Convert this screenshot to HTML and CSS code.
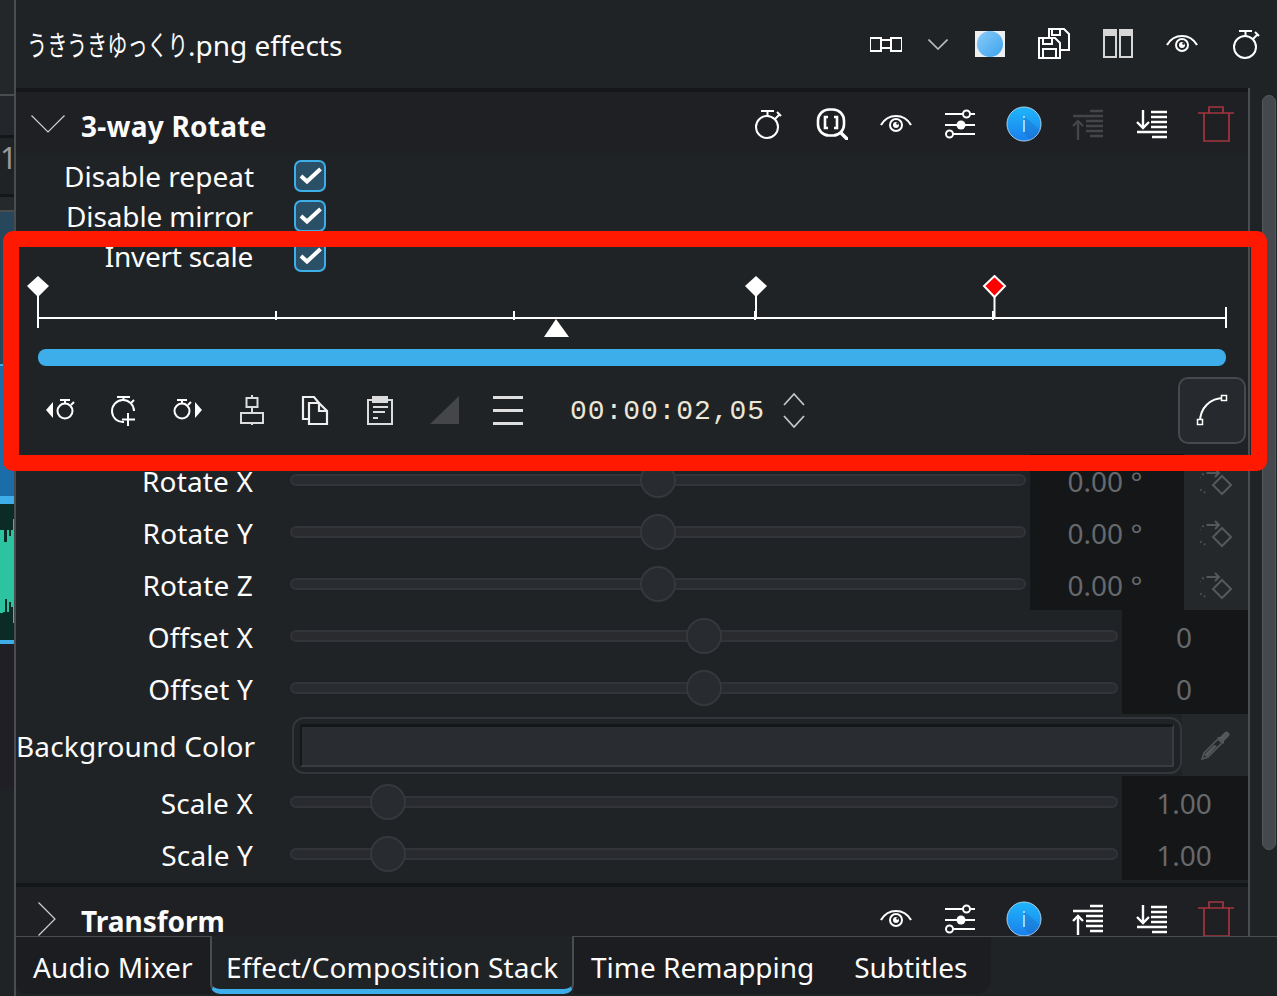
FILE: index.html
```html
<!DOCTYPE html>
<html lang="en">
<head>
<meta charset="utf-8">
<title>Effect stack</title>
<link rel="stylesheet" href="styles.css">
</head>
<body>
<svg class="defs" aria-hidden="true">
  <defs>
    <linearGradient id="infoGrad" x1="0" y1="0" x2="0" y2="1"><stop offset="0" stop-color="#1fb6fa"/><stop offset="1" stop-color="#1a7fec"/></linearGradient>
    <linearGradient id="dotGrad" x1="0" y1="0" x2="1" y2="1"><stop offset="0" stop-color="#8ccbf8"/><stop offset="1" stop-color="#3aa3ee"/></linearGradient>
    <symbol id="i-chrono" viewBox="0 0 32 32"><g fill="none" stroke="currentColor" stroke-width="2"><circle cx="15" cy="19" r="11"/><path d="M9 3H22M15.500 3V8M23 11l4-4M25 4l4 4"/></g></symbol>
    <symbol id="i-eye" viewBox="0 0 32 32"><g fill="none" stroke="currentColor"><path d="M1 17C8 5 24 5 31 17" stroke-width="2.200"/><circle cx="16" cy="17" r="6" stroke-width="2"/></g><circle cx="16" cy="17" r="3" fill="currentColor"/><circle cx="17.500" cy="15.500" r="1.200" fill="#202326"/></symbol>
    <symbol id="i-sliders" viewBox="0 0 32 32"><g fill="none" stroke="currentColor" stroke-width="2"><path d="M1 6H19M26 6H31M1 17H31M9 26H31"/><circle cx="22.500" cy="6" r="3.500"/><circle cx="5.500" cy="26" r="3.500"/></g><circle cx="17" cy="17" r="4.500" fill="currentColor"/></symbol>
    <symbol id="i-info" viewBox="0 0 36 36"><circle cx="18" cy="18" r="17" fill="url(#infoGrad)" stroke="#a9cfe8" stroke-width="1"/><path d="M18 10L34 24A17 17 0 0 1 24 34L18 27Z" fill="#1a5fb8" opacity=".28"/><rect x="17" y="14" width="2" height="12" fill="#9fd4f8"/><rect x="17" y="10" width="2" height="2" fill="#9fd4f8"/></symbol>
    <symbol id="i-up" viewBox="0 0 32 32"><g fill="none" stroke="currentColor" stroke-width="2.400"><path d="M18 3H31M1 8H31M14 13H31M14 18H31M14 23H31M18 28H31M6 32V13"/><path d="M1 18L6 13L11 18"/></g></symbol>
    <symbol id="i-down" viewBox="0 0 32 32"><g fill="none" stroke="currentColor" stroke-width="2.400"><path d="M15 4H31M15 9H31M15 14H31M15 19H31M1 24H31M16 29H31M7 2V20"/><path d="M1 14L7 20L13 14"/></g></symbol>
    <symbol id="i-trash" viewBox="0 0 36 36"><g fill="none" stroke="currentColor" stroke-width="1.700"><path d="M0 7H36M6 7V35H31V7M11 7V1H25V7"/></g></symbol>
    <symbol id="i-link" viewBox="0 0 32 32"><g fill="none" stroke="currentColor" stroke-width="2"><path d="M11 12V10H0V23H11V20M21 12V10H32V23H21V20"/><rect x="11" y="12" width="10" height="8"/></g></symbol>
    <symbol id="i-save" viewBox="0 0 32 32"><g fill="none" stroke="currentColor" stroke-width="2"><path d="M11 9V1H26L31 6V22H23M14 1V7H22V1"/><path d="M1 10H17L22 15V30H1ZM5 10V16H14V10M5 30V21H18V30" fill="#202326"/></g></symbol>
    <symbol id="i-cols" viewBox="0 0 32 32"><path d="M1 1H15V30H1ZM17 1H31V30H17Z" fill="#d6d6d6"/><path d="M3 8H13V28H3ZM19 8H29V28H19Z" fill="#202326"/></symbol>
    <symbol id="i-prev" viewBox="0 0 32 32"><path d="M2 16L9 8V24Z" fill="currentColor"/><g fill="none" stroke="currentColor" stroke-width="2"><circle cx="21" cy="17" r="7.500"/><path d="M16 6H26M21 6V9M27 11l3-3"/></g></symbol>
    <symbol id="i-next" viewBox="0 0 32 32"><path d="M30 16L23 8V24Z" fill="currentColor"/><g fill="none" stroke="currentColor" stroke-width="2"><circle cx="10" cy="17" r="7.500"/><path d="M5 6H15M10 6V9M16 11l3-3"/></g></symbol>
    <symbol id="i-add" viewBox="0 0 32 32"><g fill="none" stroke="currentColor" stroke-width="2"><path d="M26 17A11 11 0 1 0 16 28"/><path d="M9 3H22M15.500 3V6M23 9l3-3M20 19V32M14 25.500H27"/></g></symbol>
    <symbol id="i-align" viewBox="0 0 32 32"><g fill="none" stroke="#dcdcdc" stroke-width="2"><path d="M16 1V4M16 13V19M16 29V31"/><rect x="10.500" y="4" width="11" height="9"/><rect x="5" y="19" width="22" height="10"/></g></symbol>
    <symbol id="i-copy" viewBox="0 0 32 32"><g fill="none" stroke="#f0f0f0" stroke-width="2.200"><path d="M9 25H3V3H14L19 9"/><path d="M9 9H19L27 17V30H9Z"/><path d="M19 9V17H27"/></g></symbol>
    <symbol id="i-paste" viewBox="0 0 32 32"><g fill="none" stroke="#dcdcdc" stroke-width="2"><path d="M8 6H4V30H28V6H24"/><path d="M9 13H24M9 18H21M9 24H14"/></g><path d="M8 2H24V9H8Z" fill="#dcdcdc"/></symbol>
    <symbol id="i-kf" viewBox="0 0 32 32"><g fill="none" stroke="#55585b" stroke-width="2"><path d="M22 10L31 19L22 28L13 19Z"/><path d="M8 7H19M15 3L19 7L15 11"/><path d="M8 7A10 10 0 0 0 8 27" stroke-dasharray="1.500 3"/></g></symbol>
    <symbol id="i-drop" viewBox="0 0 32 32"><path d="M3 30L5 24L19 10L23 14L9 28Z" fill="none" stroke="#55585b" stroke-width="1.500"/><path d="M5 26L15 16L18 17L8 28Z" fill="#55585b"/><path d="M18 8L21 8L26 3C28 1 32 5 30 7L25 12L25 15Z" fill="#55585b"/></symbol>
  </defs>
</svg>

<div class="app">
  <div class="upper">
    <aside class="strip">
      <div class="st st-a"></div>
      <div class="st st-b"></div>
      <div class="st st-c"><span class="st-num">1</span></div>
      <div class="st st-d"></div>
      <div class="st st-e"></div>
      <div class="st st-f"></div>
      <div class="st st-g"></div>
      <svg class="st-wave" viewBox="0 0 14 136" preserveAspectRatio="none"><rect width="14" height="136" fill="#2cc3a1"/><path d="M0 0H14V15H13V26H11V32H9V26H7V38H4V26H0Z" fill="#0b2b26"/><path d="M0 136H14V119H13V103H11V98H9V108H7V95H5V108H3V109H0Z" fill="#0b2b26"/></svg>
      <div class="st st-g2"></div>
      <div class="st st-h"></div>
    </aside>

    <main class="panel">
      <header class="top-head">
        <h1 class="top-title"><span class="kana">うきうきゆっくり</span>.png effects</h1>
        <div class="top-tools">
          <span class="btn"><svg class="ic"><use href="#i-link"/></svg></span>
          <span class="btn btn-narrow"><svg class="chev-down" viewBox="0 0 20 11"><path d="M0.500 0.500L10 10L19.500 0.500" fill="none" stroke="#bdbdbd" stroke-width="1.600"/></svg></span>
          <span class="btn"><span class="swatch-dot"><svg class="dot" viewBox="0 0 26 26"><circle cx="13" cy="13" r="13" fill="url(#dotGrad)"/></svg></span></span>
          <span class="btn"><svg class="ic"><use href="#i-save"/></svg></span>
          <span class="btn"><svg class="ic"><use href="#i-cols"/></svg></span>
          <span class="btn"><svg class="ic"><use href="#i-eye"/></svg></span>
          <span class="btn"><svg class="ic"><use href="#i-chrono"/></svg></span>
        </div>
      </header>

      <div class="split">
        <div class="stack">
          <div class="sep"></div>
          <section class="fx">
            <div class="fx-head">
              <svg class="chev-open" viewBox="0 0 34 18"><path d="M0.500 0.500L17 17L33.500 0.500" fill="none" stroke="#d0d0d0" stroke-width="1.200"/></svg>
              <h2 class="fx-title fx-title-open">3-way Rotate</h2>
              <div class="fx-tools">
                <span class="btn"><svg class="ic"><use href="#i-chrono"/></svg></span>
                <span class="btn"><svg class="ic" viewBox="0 0 32 32"><g fill="none" stroke="currentColor" stroke-width="2.600"><rect x="2" y="1.500" width="26" height="26" rx="11"/><path d="M24 24L32 32" stroke-width="3.400"/><path d="M12 9H9V20H12M18 9H21V20H18"/></g></svg></span>
                <span class="btn"><svg class="ic"><use href="#i-eye"/></svg></span>
                <span class="btn"><svg class="ic"><use href="#i-sliders"/></svg></span>
                <span class="btn"><svg class="ic-36"><use href="#i-info"/></svg></span>
                <span class="btn is-off"><svg class="ic"><use href="#i-up"/></svg></span>
                <span class="btn"><svg class="ic"><use href="#i-down"/></svg></span>
                <span class="btn is-danger"><svg class="ic-36"><use href="#i-trash"/></svg></span>
              </div>
            </div>

            <div class="checks">
              <label class="row-check"><span class="lbl">Disable repeat</span><span class="box"><svg viewBox="0 0 28 28"><path d="M5 14L11 19.500L24.500 7" fill="none" stroke="#fff" stroke-width="4"/></svg></span></label>
              <label class="row-check"><span class="lbl lbl-tight">Disable mirror</span><span class="box"><svg viewBox="0 0 28 28"><path d="M5 14L11 19.500L24.500 7" fill="none" stroke="#fff" stroke-width="4"/></svg></span></label>
              <label class="row-check"><span class="lbl lbl-tighter">Invert scale</span><span class="box"><svg viewBox="0 0 28 28"><path d="M5 14L11 19.500L24.500 7" fill="none" stroke="#fff" stroke-width="4"/></svg></span></label>
            </div>

            <svg class="ruler" viewBox="16 275 1232 63">
              <g stroke="#fff" stroke-width="2" fill="none">
                <path d="M38 318H1226M276 311V320M514 311V320M755 311V320M993 311V320M1226 307V328"/>
                <path d="M38 290V328M756 290V318M994.500 290V318"/>
              </g>
              <path d="M38 276L49 286L38 297L27 286Z" fill="#fff"/>
              <path d="M756 276L767 286L756 297L745 286Z" fill="#fff"/>
              <path d="M994.500 276L1005 286L994.500 297L984 286Z" fill="#f00" stroke="#fff" stroke-width="2"/>
              <path d="M556 319L569 337H544Z" fill="#fff"/>
            </svg>
            <div class="progress"></div>

            <div class="kf-bar">
              <span class="btn"><svg class="ic"><use href="#i-prev"/></svg></span>
              <span class="btn"><svg class="ic"><use href="#i-add"/></svg></span>
              <span class="btn"><svg class="ic"><use href="#i-next"/></svg></span>
              <span class="btn"><svg class="ic"><use href="#i-align"/></svg></span>
              <span class="btn"><svg class="ic"><use href="#i-copy"/></svg></span>
              <span class="btn"><svg class="ic"><use href="#i-paste"/></svg></span>
              <span class="btn"><svg class="ic" viewBox="0 0 32 32"><path d="M2 30L31 2V30Z" fill="#444649"/></svg></span>
              <span class="btn"><span class="burger"><i></i><i></i><i></i></span></span>
              <span class="time">00:00:02,05</span>
              <span class="spin"><svg viewBox="0 0 24 36"><path d="M2 13L12 2L22 13M2 24L12 35L22 24" fill="none" stroke="#c4c4c4" stroke-width="1.800"/></svg></span>
              <span class="curve"><svg viewBox="0 0 34 34"><path d="M5 29C5 15 15 5 29 5" fill="none" stroke="#fff" stroke-width="2"/><rect x="2.500" y="26.500" width="5" height="5" fill="#202326" stroke="#fff" stroke-width="1.500"/><rect x="26.500" y="2.500" width="5" height="5" fill="#202326" stroke="#fff" stroke-width="1.500"/></svg></span>
            </div>

            <div class="params">
              <div class="row"><span class="lbl">Rotate X</span><span class="track"><span class="knob" style="left:50%"></span></span><span class="val val-deg">0.00 °</span><span class="kf-cell"><svg class="ic"><use href="#i-kf"/></svg></span></div>
              <div class="row"><span class="lbl">Rotate Y</span><span class="track"><span class="knob" style="left:50%"></span></span><span class="val val-deg">0.00 °</span><span class="kf-cell"><svg class="ic"><use href="#i-kf"/></svg></span></div>
              <div class="row"><span class="lbl">Rotate Z</span><span class="track"><span class="knob" style="left:50%"></span></span><span class="val val-deg">0.00 °</span><span class="kf-cell"><svg class="ic"><use href="#i-kf"/></svg></span></div>
              <div class="row"><span class="lbl">Offset X</span><span class="track"><span class="knob" style="left:50%"></span></span><span class="val">0</span></div>
              <div class="row"><span class="lbl">Offset Y</span><span class="track"><span class="knob" style="left:50%"></span></span><span class="val">0</span></div>
              <div class="row row-color"><span class="lbl">Background Color</span><span class="color-field"><span class="color-inner"></span></span><span class="drop-cell"><svg class="ic"><use href="#i-drop"/></svg></span></div>
              <div class="row"><span class="lbl">Scale X</span><span class="track"><span class="knob" style="left:11.700%"></span></span><span class="val">1.00</span></div>
              <div class="row"><span class="lbl">Scale Y</span><span class="track"><span class="knob" style="left:11.700%"></span></span><span class="val">1.00</span></div>
            </div>
          </section>
          <div class="sep sep-second"></div>
          <section class="fx-head fx-head-closed">
            <svg class="chev-closed" viewBox="0 0 18 34"><path d="M0.500 0.500L17 17L0.500 33.500" fill="none" stroke="#d0d0d0" stroke-width="1.200"/></svg>
            <h2 class="fx-title fx-title-closed">Transform</h2>
            <div class="fx-tools">
              <span class="btn"><svg class="ic"><use href="#i-eye"/></svg></span>
              <span class="btn"><svg class="ic"><use href="#i-sliders"/></svg></span>
              <span class="btn"><svg class="ic-36"><use href="#i-info"/></svg></span>
              <span class="btn"><svg class="ic"><use href="#i-up"/></svg></span>
              <span class="btn"><svg class="ic"><use href="#i-down"/></svg></span>
              <span class="btn is-danger"><svg class="ic-36"><use href="#i-trash"/></svg></span>
            </div>
          </section>
        </div>
        <div class="scroll"><div class="thumb"></div></div>
      </div>
    </main>
  </div>

  <nav class="tabs">
    <span class="tab tab-first">Audio Mixer</span>
    <span class="tab tab-active">Effect/Composition Stack</span>
    <span class="tab tab-third">Time Remapping</span>
    <span class="tab tab-last">Subtitles</span>
  </nav>
</div>

<div class="callout"></div>
</body>
</html>
```

FILE: styles.css
```css
* { box-sizing: border-box; }
html, body { margin: 0; padding: 0; }
body {
  width: 1277px;
  height: 996px;
  overflow: hidden;
  background: #202326;
  color: #fcfcfc;
  font-family: "Noto Sans", "Noto Sans CJK JP", sans-serif;
  font-size: 28px;
  position: relative;
}
.defs { position: absolute; width: 0; height: 0; }
.app { display: flex; flex-direction: column; height: 996px; }
.upper { display: flex; height: 936px; overflow: hidden; }

/* left strip: edge of the timeline behind the panel */
.strip { width: 16px; flex: none; display: flex; flex-direction: column; border-right: 2px solid #4a4d50; }
.st { flex: none; }
.st-a { height: 96px; background: #24272a; border-bottom: 2px solid #4a4d50; }
.st-b { height: 42px; background: #23262a; border-bottom: 3px solid #141618; }
.st-c { height: 56px; background: #202326; color: #9a9a9a; font-size: 30px; line-height: 40px; text-align: right; overflow: hidden; }
.st-num { display: block; margin-right: 1px; letter-spacing: -4px; }
.st-d { height: 18px; background: #26292c; border-top: 3px solid #141618; border-bottom: 2px solid #4a4d50; }
.st-e { height: 152px; background: #27475c; }
.st-f { height: 2px; background: #3daee9; }
.st-g { height: 138px; background: #1a6da8; border-bottom: 8px solid #3daee9; }
.st-wave { display: block; width: 14px; height: 136px; flex: none; }
.st-g2 { height: 4px; background: #3daee9; width: 14px; }
.st-h { height: 144px; background: #211f26; width: 14px; }

.panel { flex: 1; display: flex; flex-direction: column; min-width: 0; }
.top-head { height: 88px; flex: none; display: flex; align-items: center; }
.top-title { margin: 0 0 0 11px; font-size: 28px; font-weight: 400; white-space: nowrap; }
.kana { display: inline-block; width: 161px; white-space: nowrap; transform: scaleX(.72); transform-origin: left center; }
.top-tools { margin-left: auto; margin-right: -1px; display: flex; align-items: center; color: #fff; }

.btn { width: 64px; height: 64px; flex: none; display: flex; align-items: center; justify-content: center; color: #fff; }
.btn-narrow { width: 40px; }
.ic { width: 32px; height: 32px; display: block; }
.ic-36 { width: 36px; height: 36px; display: block; }
.is-off { color: #434548; }
.is-danger { color: #a5343f; }
.chev-down { width: 20px; height: 11px; }
.swatch-dot { width: 30px; height: 26px; background: #eceef0; display: flex; align-items: center; justify-content: center; }
.dot { width: 26px; height: 26px; display: block; }

.split { flex: 1; display: flex; min-height: 0; }
.stack { width: 1234px; flex: none; border-right: 2px solid #4a4d50; overflow: hidden; }
.sep { height: 4px; background: #141618; }
.sep-second { margin-top: 3px; }

.scroll { flex: 1; padding: 7px 1px 0 12px; }
.thumb { height: 755px; background: #45494d; border: 1px solid #54585c; border-radius: 7px; }

.fx-head { height: 63px; width: 1232px; background: #1e2023; display: flex; align-items: center; }
.fx-head-closed { height: 64px; }
.chev-open { width: 34px; height: 18px; margin-left: 15px; flex: none; }
.chev-closed { width: 18px; height: 34px; margin-left: 22px; flex: none; }
.fx-title { margin: 0 0 0 16px; padding-top: 4px; font-size: 28px; line-height: 26px; font-weight: 700; white-space: nowrap; }
.fx-title-open { letter-spacing: .25px; }
.fx-title-closed { margin-left: 25px; }
.fx-tools { margin-left: auto; display: flex; align-items: center; }

.fx { width: 1232px; }
.checks { padding-top: 1px; }
.row-check { display: flex; align-items: center; height: 40px; }
.lbl { width: 238px; flex: none; text-align: right; white-space: nowrap; }
.lbl-tight { padding-right: 1px; letter-spacing: -.13px; }
.lbl-tighter { padding-right: 1px; letter-spacing: -.25px; }
.box { width: 32px; height: 32px; margin-left: 40px; border: 2px solid #3daee9; border-radius: 7px; background: #2a5068; flex: none; }
.box svg { display: block; width: 28px; height: 28px; }

.ruler { display: block; width: 1232px; height: 63px; margin-top: -1px; }
.progress { height: 17px; margin: 11px 22px 0 22px; width: 1188px; background: #3daee9; border-radius: 8px; }
.kf-bar { height: 66px; margin-top: 11px; padding-left: 12px; display: flex; align-items: center; }
.burger { display: flex; flex-direction: column; gap: 10px; width: 30px; }
.burger i { display: block; height: 3px; background: #dedede; }
.time { margin-left: 30px; padding-top: 2px; font-family: "Liberation Mono", monospace; font-size: 28px; letter-spacing: .92px; color: #ece6d6; white-space: nowrap; }
.spin { width: 24px; height: 36px; margin-left: 17px; flex: none; }
.spin svg { display: block; width: 24px; height: 36px; }
.curve { margin-left: auto; margin-right: 2px; width: 68px; height: 67px; flex: none; border: 2px solid #46494d; border-radius: 10px; background: #26292d; display: flex; align-items: center; justify-content: center; }
.curve svg { display: block; width: 34px; height: 34px; }

.params { padding-top: 11px; }
.params .lbl { padding-top: 2px; padding-right: 1px; letter-spacing: .15px; }
.row { height: 52px; display: flex; align-items: center; }
.track { flex: 1; height: 12px; margin-left: 36px; margin-right: 4px; background: #292b2f; border: 2px solid #313438; border-radius: 6px; position: relative; }
.knob { position: absolute; top: 50%; width: 36px; height: 36px; transform: translate(-50%, -50%); border-radius: 50%; background: #282b2f; border: 2px solid #35383c; }
.val { width: 126px; height: 52px; flex: none; padding-top: 1px; padding-right: 2px; background: #141618; color: #66696c; text-align: center; line-height: 52px; }
.val-deg { width: 154px; padding-right: 4px; }
.kf-cell { width: 64px; height: 52px; flex: none; background: #25282b; display: flex; align-items: center; justify-content: center; padding-top: 4px; }
.row-color { height: 62px; }
.color-field { flex: 1; height: 57px; margin-left: 38px; border: 2px solid #33363a; border-radius: 12px; padding: 5px 6px; display: flex; }
.color-inner { flex: 1; background: #292c30; border-top: 3px solid #141618; border-left: 2px solid #141618; border-right: 2px solid #3a3d40; border-bottom: 2px solid #3a3d40; }
.drop-cell { width: 66px; height: 62px; flex: none; background: #25282b; display: flex; align-items: center; justify-content: center; }

.tabs { height: 60px; flex: none; display: flex; margin-left: 14px; border-left: 2px solid #4a4d50; box-shadow: inset 0 1px 0 #4a4d50; padding-bottom: 2px; }
.tab { flex: none; height: 58px; padding: 8px 20px 0; font-size: 28px; line-height: 44px; letter-spacing: .15px; white-space: nowrap; background: #1b1d20; border-top: 1px solid #4a4d50; }
.tab-first { width: 195px; padding-left: 17px; border-bottom-left-radius: 10px; }
.tab-active { width: 364px; padding: 9px 0 0 14px; background: #202326; border-top: 0; border-left: 2px solid #4a4d50; border-right: 2px solid #4a4d50; border-bottom: 5px solid #3daee9; border-radius: 0 0 10px 10px; margin-left: -1px; }
.tab-third { padding-left: 17px; letter-spacing: 0; }
.tab-last { width: 157px; padding-left: 20px; padding-right: 0; letter-spacing: -.1px; border-bottom-right-radius: 14px; }

.callout { position: absolute; left: 3px; top: 231px; width: 1264px; height: 240px; border: 16px solid #ff1900; border-radius: 10px; background-clip: padding-box; pointer-events: none; }
```
